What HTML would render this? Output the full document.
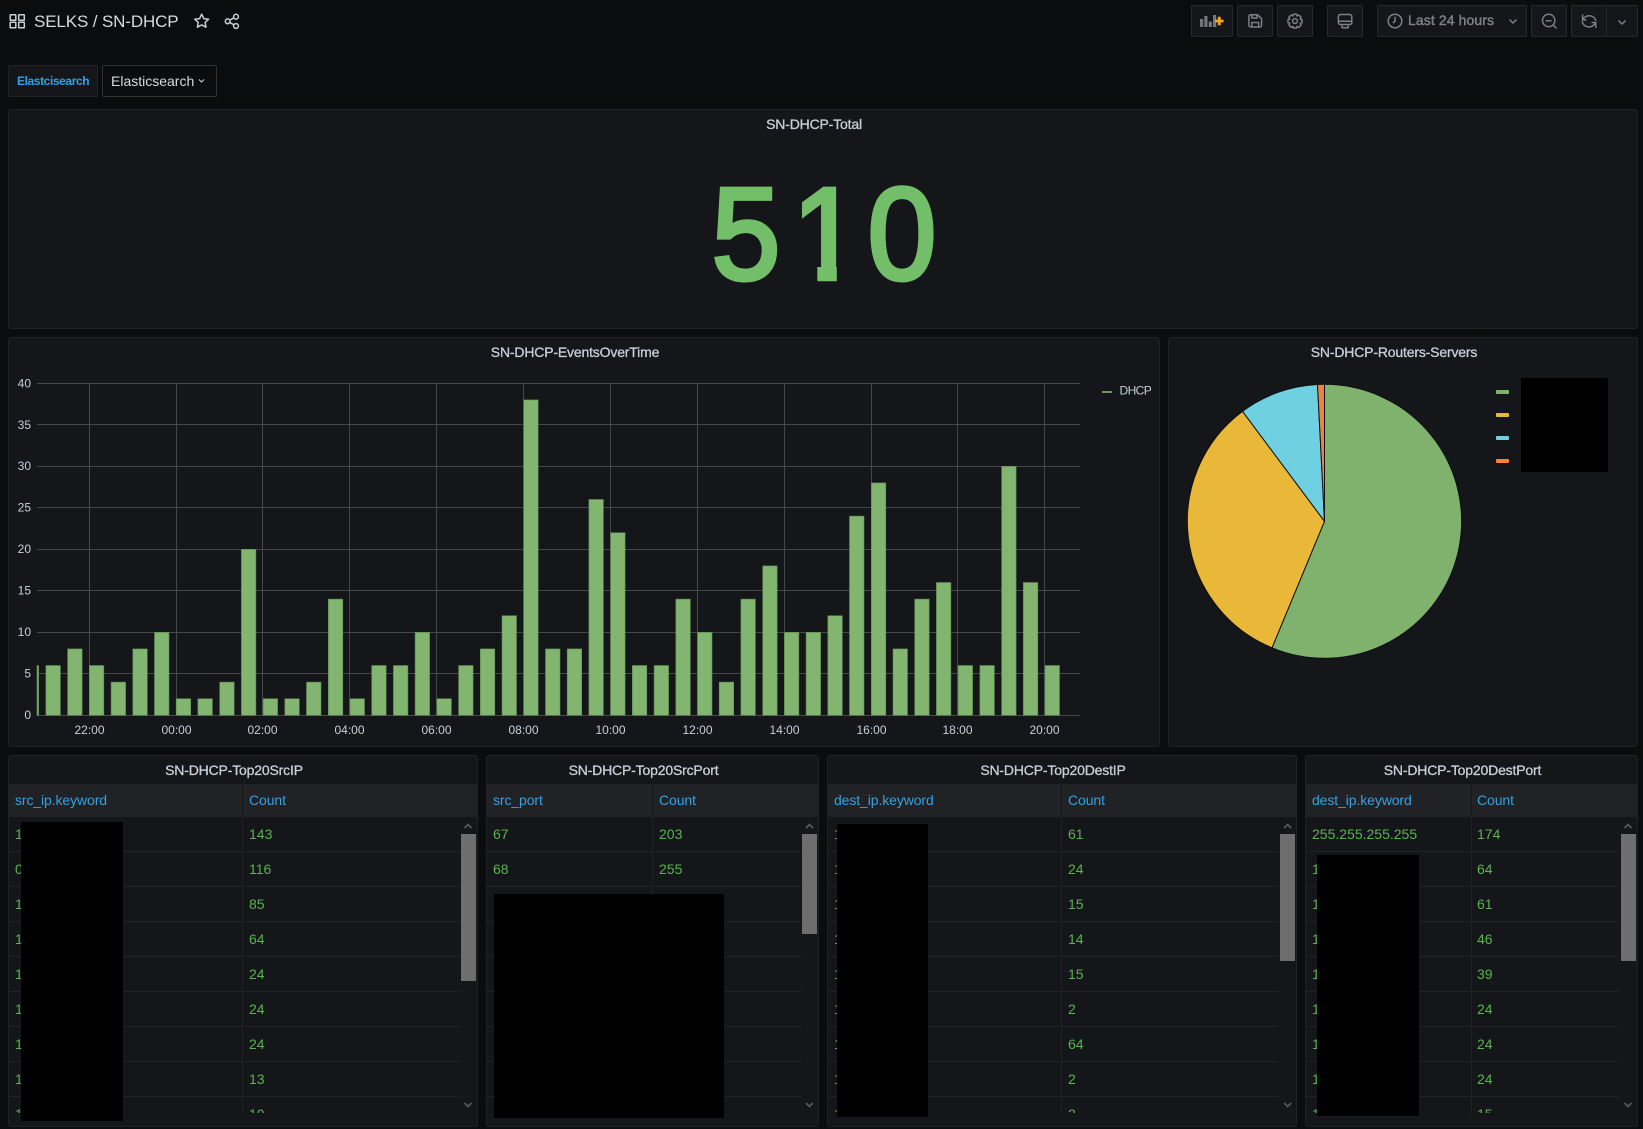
<!DOCTYPE html>
<html><head><meta charset="utf-8"><title>SELKS / SN-DHCP</title>
<style>
html,body{margin:0;padding:0;background:#0b0c0e;width:1643px;height:1129px;overflow:hidden}
body{font-family:"Liberation Sans",sans-serif;position:relative;color:#c7d0d9}
.a{position:absolute}
.panel{position:absolute;box-sizing:border-box;background:#141619;border:1px solid #202226;border-radius:3px}
.title{position:absolute;left:0;right:18px;text-align:center;font-size:14px;line-height:18px;color:#c7d0d9;letter-spacing:-.17px;-webkit-text-stroke:.3px #c7d0d9;white-space:nowrap}
.btn{position:absolute;box-sizing:border-box;top:5px;height:32px;background:#141619;border:1px solid #26282c;border-radius:2px}
.head{position:absolute;left:0;right:0;top:28px;height:33px;background:#202226;font-size:14px;line-height:33px;color:#33a2e5;letter-spacing:-.1px}
.head span{position:absolute;top:0}
.body{position:absolute;left:0;right:0;top:61px;height:296px;overflow:hidden;font-size:14px;color:#5ab44f}
.r{position:relative;box-sizing:border-box;height:35px;border-bottom:1px solid #202226;line-height:34px}
.r b,.r i{position:absolute;top:0;font-weight:normal;font-style:normal}
.sep{position:absolute;top:28px;height:329px;width:1px;background:#202226}
.sep:before{content:"";position:absolute;left:0;top:0;height:33px;width:1px;background:#141619}
.thumb{position:absolute;top:78px;background:#6e6e6e}
.blk{position:absolute;background:#000}
svg text{font-family:"Liberation Sans",sans-serif}
#p1 .r{width:452px}#p1 b,#p1 .hb{left:6px}#p1 i,#p1 .hi{left:240px}
#p2 .r{width:314px}#p2 b,#p2 .hb{left:6px}#p2 i,#p2 .hi{left:172px}
#p3 .r{width:451px}#p3 b,#p3 .hb{left:6px}#p3 i,#p3 .hi{left:240px}
#p4 .r{width:314px}#p4 b,#p4 .hb{left:6px}#p4 i,#p4 .hi{left:171px}
</style></head><body>

<div class="a" style="left:34px;top:11px;font-size:17px;line-height:22px;color:#d8d9da;letter-spacing:-.13px;white-space:nowrap">SELKS / SN-DHCP</div>

<div class="a" style="box-sizing:border-box;left:8px;top:65px;width:90px;height:32px;background:#141619;border:1px solid #202226;border-radius:2px;font-size:12px;font-weight:bold;line-height:30px;color:#33a2e5;padding-left:8px;letter-spacing:-.4px;white-space:nowrap">Elastcisearch</div>
<div class="a" style="box-sizing:border-box;left:102px;top:65px;width:115px;height:32px;background:#0b0c0e;border:1px solid #2c3235;border-radius:2px;font-size:14px;line-height:30px;color:#d8d9da;padding-left:8px;white-space:nowrap">Elasticsearch</div>

<div class="btn" style="left:1191px;width:42px"></div>
<div class="btn" style="left:1237px;width:36px"></div>
<div class="btn" style="left:1277px;width:36px"></div>
<div class="btn" style="left:1327px;width:36px"></div>
<div class="btn" style="left:1377px;width:150px"></div>
<div class="a" style="left:1408px;top:10px;font-size:14px;line-height:20px;color:#7b8087;-webkit-text-stroke:.45px #7b8087;letter-spacing:.1px;white-space:nowrap">Last 24 hours</div>
<div class="btn" style="left:1531px;width:36px"></div>
<div class="btn" style="left:1571px;width:36px;border-right:0"></div>
<div class="btn" style="left:1606px;width:32px"></div>

<div class="panel" style="left:8px;top:109px;width:1630px;height:220px"><div class="title" style="top:5px">SN-DHCP-Total</div></div>

<div class="panel" style="left:8px;top:337px;width:1152px;height:410px"><div class="title" style="top:5px">SN-DHCP-EventsOverTime</div></div>
<div class="panel" style="left:1168px;top:337px;width:470px;height:410px"><div class="title" style="top:5px">SN-DHCP-Routers-Servers</div></div>

<div class="panel" id="p1" style="left:8px;top:755px;width:470px;height:372px">
<div class="title" style="top:5px">SN-DHCP-Top20SrcIP</div>
<div class="head"><span class="hb">src_ip.keyword</span><span class="hi">Count</span></div>
<div class="body">
<div class="r"><b>1</b><i>143</i></div><div class="r"><b>0</b><i>116</i></div><div class="r"><b>1</b><i>85</i></div><div class="r"><b>1</b><i>64</i></div><div class="r"><b>1</b><i>24</i></div><div class="r"><b>1</b><i>24</i></div><div class="r"><b>1</b><i>24</i></div><div class="r"><b>1</b><i>13</i></div><div class="r"><b>1</b><i>10</i></div>
</div>
<div class="sep" style="left:233px"></div>
<div class="thumb" style="left:452px;width:15px;height:147px"></div>
</div>

<div class="panel" id="p2" style="left:486px;top:755px;width:333px;height:372px">
<div class="title" style="top:5px">SN-DHCP-Top20SrcPort</div>
<div class="head"><span class="hb">src_port</span><span class="hi">Count</span></div>
<div class="body">
<div class="r"><b>67</b><i>203</i></div><div class="r"><b>68</b><i>255</i></div><div class="r"><b>1</b></div><div class="r"><b>1</b></div><div class="r"><b>1</b></div><div class="r"><b>1</b></div><div class="r"><b>1</b></div><div class="r"><b>1</b></div><div class="r"><b>1</b></div>
</div>
<div class="sep" style="left:165px"></div>
<div class="thumb" style="left:315px;width:15px;height:100px"></div>
</div>

<div class="panel" id="p3" style="left:827px;top:755px;width:470px;height:372px">
<div class="title" style="top:5px">SN-DHCP-Top20DestIP</div>
<div class="head"><span class="hb">dest_ip.keyword</span><span class="hi">Count</span></div>
<div class="body">
<div class="r"><b>1</b><i>61</i></div><div class="r"><b>1</b><i>24</i></div><div class="r"><b>1</b><i>15</i></div><div class="r"><b>1</b><i>14</i></div><div class="r"><b>1</b><i>15</i></div><div class="r"><b>1</b><i>2</i></div><div class="r"><b>1</b><i>64</i></div><div class="r"><b>1</b><i>2</i></div><div class="r"><b>1</b><i>2</i></div>
</div>
<div class="sep" style="left:233px"></div>
<div class="thumb" style="left:452px;width:15px;height:127px"></div>
</div>

<div class="panel" id="p4" style="left:1305px;top:755px;width:333px;height:372px">
<div class="title" style="top:5px">SN-DHCP-Top20DestPort</div>
<div class="head"><span class="hb">dest_ip.keyword</span><span class="hi">Count</span></div>
<div class="body">
<div class="r"><b>255.255.255.255</b><i>174</i></div><div class="r"><b>1</b><i>64</i></div><div class="r"><b>1</b><i>61</i></div><div class="r"><b>1</b><i>46</i></div><div class="r"><b>1</b><i>39</i></div><div class="r"><b>1</b><i>24</i></div><div class="r"><b>1</b><i>24</i></div><div class="r"><b>1</b><i>24</i></div><div class="r"><b>1</b><i>15</i></div>
</div>
<div class="sep" style="left:165px"></div>
<div class="thumb" style="left:315px;width:15px;height:127px"></div>
</div>

<svg class="a" style="left:0;top:0" width="1643" height="1129" viewBox="0 0 1643 1129" xmlns="http://www.w3.org/2000/svg">
<!-- big stat -->
<text transform="translate(824,0) scale(.94,1) translate(-824,0)" x="741 826.6 907" y="279" text-anchor="middle" font-size="131" fill="#73bf69" stroke="#73bf69" stroke-width="4.5">510</text>
<path d="M788 264H817.3V286H788ZM836.8 264H864V286H836.8Z" fill="#141619"/>
<!-- grid -->
<g stroke="#464749" stroke-width="1" shape-rendering="crispEdges">
<path d="M37 383.5H1080M37 424.5H1080M37 466.5H1080M37 507.5H1080M37 549.5H1080M37 590.5H1080M37 632.5H1080M37 673.5H1080M37 715.5H1080"/>
<path d="M89.5 383V715M176.5 383V715M262.5 383V715M349.5 383V715M436.5 383V715M523.5 383V715M610.5 383V715M697.5 383V715M784.5 383V715M871.5 383V715M957.5 383V715M1044.5 383V715"/>
</g>
<!-- bars -->
<g transform="translate(0,715.3) scale(1,-1)" fill="#82b570" stroke="#5f8a52" stroke-width=".6">
<rect x="37" y="0" width="1.6" height="49.8"/>
<rect x="45.9" width="14.5" height="49.8"/><rect x="67.6" width="14.5" height="66.4"/><rect x="89.3" width="14.5" height="49.8"/><rect x="111.1" width="14.5" height="33.2"/><rect x="132.8" width="14.5" height="66.4"/><rect x="154.5" width="14.5" height="83"/><rect x="176.2" width="14.5" height="16.6"/><rect x="197.9" width="14.5" height="16.6"/><rect x="219.7" width="14.5" height="33.2"/><rect x="241.4" width="14.5" height="166"/><rect x="263.1" width="14.5" height="16.6"/><rect x="284.8" width="14.5" height="16.6"/><rect x="306.5" width="14.5" height="33.2"/><rect x="328.3" width="14.5" height="116.2"/><rect x="350" width="14.5" height="16.6"/><rect x="371.7" width="14.5" height="49.8"/><rect x="393.4" width="14.5" height="49.8"/><rect x="415.1" width="14.5" height="83"/><rect x="436.9" width="14.5" height="16.6"/><rect x="458.6" width="14.5" height="49.8"/><rect x="480.3" width="14.5" height="66.4"/><rect x="502" width="14.5" height="99.6"/><rect x="523.7" width="14.5" height="315.4"/><rect x="545.5" width="14.5" height="66.4"/><rect x="567.2" width="14.5" height="66.4"/><rect x="588.9" width="14.5" height="215.8"/><rect x="610.6" width="14.5" height="182.6"/><rect x="632.3" width="14.5" height="49.8"/><rect x="654.1" width="14.5" height="49.8"/><rect x="675.8" width="14.5" height="116.2"/><rect x="697.5" width="14.5" height="83"/><rect x="719.2" width="14.5" height="33.2"/><rect x="740.9" width="14.5" height="116.2"/><rect x="762.7" width="14.5" height="149.4"/><rect x="784.4" width="14.5" height="83"/><rect x="806.1" width="14.5" height="83"/><rect x="827.8" width="14.5" height="99.6"/><rect x="849.5" width="14.5" height="199.2"/><rect x="871.3" width="14.5" height="232.4"/><rect x="893" width="14.5" height="66.4"/><rect x="914.7" width="14.5" height="116.2"/><rect x="936.4" width="14.5" height="132.8"/><rect x="958.1" width="14.5" height="49.8"/><rect x="979.9" width="14.5" height="49.8"/><rect x="1001.6" width="14.5" height="249"/><rect x="1023.3" width="14.5" height="132.8"/><rect x="1045" width="14.5" height="49.8"/>
</g>
<!-- axis labels -->
<g font-size="12" fill="#c7d0d9" text-anchor="end">
<text x="31" y="387.5">40</text><text x="31" y="429">35</text><text x="31" y="470">30</text><text x="31" y="511.5">25</text><text x="31" y="553">20</text><text x="31" y="594.5">15</text><text x="31" y="636">10</text><text x="31" y="677.5">5</text><text x="31" y="719">0</text>
</g>
<g font-size="12" fill="#c7d0d9" text-anchor="middle">
<text x="89.5" y="734">22:00</text><text x="176.5" y="734">00:00</text><text x="262.5" y="734">02:00</text><text x="349.5" y="734">04:00</text><text x="436.5" y="734">06:00</text><text x="523.5" y="734">08:00</text><text x="610.5" y="734">10:00</text><text x="697.5" y="734">12:00</text><text x="784.5" y="734">14:00</text><text x="871.5" y="734">16:00</text><text x="957.5" y="734">18:00</text><text x="1044.5" y="734">20:00</text>
</g>
<rect x="1102" y="391" width="10" height="2" fill="#6b9a5c"/>
<text x="1119.5" y="394.5" font-size="12" letter-spacing="-.6" fill="#c7d0d9">DHCP</text>
<!-- pie -->
<g stroke="#0e0f10" stroke-width="1" stroke-linejoin="round">
<path d="M1324.5 521.3L1324.5 384.3A137 137 0 1 1 1272 647.8Z" fill="#7eb26d"/>
<path d="M1324.5 521.3L1272 647.8A137 137 0 0 1 1242.5 411.3Z" fill="#eab839"/>
<path d="M1324.5 521.3L1242.5 411.3A137 137 0 0 1 1317.5 384.5Z" fill="#6ed0e0"/>
<path d="M1324.5 521.3L1317.5 384.5A137 137 0 0 1 1324.5 384.3Z" fill="#ef843c"/>
</g>
<rect x="1496" y="390" width="13" height="4" rx="1" fill="#7eb26d"/>
<rect x="1496" y="413" width="13" height="4" rx="1" fill="#eab839"/>
<rect x="1496" y="436" width="13" height="4" rx="1" fill="#6ed0e0"/>
<rect x="1496" y="459" width="13" height="4" rx="1" fill="#ef843c"/>
<!-- scroll arrows -->
<g fill="none" stroke="#595b5e" stroke-width="1.6">
<path d="M464.5 828L468 824.5L471.5 828M464.5 1103L468 1106.5L471.5 1103"/>
<path d="M806 828L809.5 824.5L813 828M806 1103L809.5 1106.5L813 1103"/>
<path d="M1284.2 828L1287.7 824.5L1291.2 828M1284.2 1103L1287.7 1106.5L1291.2 1103"/>
<path d="M1624.5 828L1628 824.5L1631.5 828M1624.5 1103L1628 1106.5L1631.5 1103"/>
</g>
<!-- top left icons -->
<g fill="none" stroke="#c7d0d9" stroke-width="1.5">
<rect x="10.2" y="14.7" width="5.6" height="5.6" rx=".6"/><rect x="18.7" y="14.7" width="5.6" height="5.6" rx=".6"/><rect x="10.2" y="22.2" width="5.6" height="5.6" rx=".6"/><rect x="18.7" y="22.2" width="5.6" height="5.6" rx=".6"/>
<path d="M201.7 14.2L203.8 18.6L208.6 19.2L205.1 22.5L206 27.2L201.7 24.9L197.4 27.2L198.3 22.5L194.8 19.2L199.6 18.6Z" stroke-linejoin="round"/>
<circle cx="236" cy="16.7" r="2.4"/><circle cx="227.7" cy="21.3" r="2.4"/><circle cx="236" cy="26" r="2.4"/>
<path d="M229.8 20.1L233.9 17.8M229.8 22.5L233.9 24.8"/>
</g>
<path d="M199 79.5L201.5 82L204 79.5" fill="none" stroke="#c7d0d9" stroke-width="1.1"/>
<!-- toolbar icons -->
<g fill="#73777c">
<rect x="1200" y="19" width="3.2" height="8"/><rect x="1204.3" y="16" width="3.2" height="11"/><rect x="1208.7" y="21.5" width="3.2" height="5.5"/><rect x="1213" y="15" width="3.2" height="12"/>
</g>
<path d="M1219.3 16.7V25.3M1215 21H1223.6" stroke="#f5a623" stroke-width="2.8" fill="none"/>
<g fill="none" stroke="#7b8087" stroke-width="1.5" stroke-linejoin="round">
<path d="M1250.5 14.8H1257.6L1261.6 18.8V25.4A1.6 1.6 0 0 1 1260 27H1250.5A1.6 1.6 0 0 1 1248.9 25.4V16.4A1.6 1.6 0 0 1 1250.5 14.8Z"/>
<path d="M1251.8 27V22.5H1258.7V27M1251.8 14.8V18H1257V14.8"/>
<circle cx="1295" cy="21" r="2.4"/>
<path d="M1293.4 14.2H1296.6L1297.1 16L1298.9 15.1L1301.1 17.3L1300.2 19.1L1302 19.6V22.8L1300.2 23.3L1301.1 25.1L1298.9 27.3L1297.1 26.4L1296.6 28H1293.4L1292.9 26.4L1291.1 27.3L1288.9 25.1L1289.8 23.3L1288 22.8V19.6L1289.8 19.1L1288.9 17.3L1291.1 15.1L1292.9 16Z"/>
<rect x="1338.4" y="14.5" width="13.4" height="10" rx="2"/>
<path d="M1338.4 21.3H1351.8M1342 24.5V27.8H1348.2V24.5"/>
<circle cx="1395" cy="21" r="6.8"/><path d="M1395 16.8V21.5L1392.8 23"/>
<circle cx="1548.7" cy="20.5" r="6.2"/><path d="M1545.7 20.7H1551.7M1553.3 25.1L1556.5 28.3"/>
<path d="M1583 19.5A7 7 0 0 1 1596 21M1595.3 22.8A7 7 0 0 1 1582 21.2"/>
<path d="M1582.6 14.5V20H1586.5M1595.7 28V22.5H1591.5"/>
<path d="M1509.5 19.5L1513 23L1516.5 19.5M1618.5 20.5L1622 24L1625.5 20.5"/>
</g>
</svg>

<div class="blk" style="left:21px;top:822px;width:102px;height:299px"></div>
<div class="blk" style="left:494px;top:894px;width:230px;height:224px"></div>
<div class="blk" style="left:837px;top:824px;width:91px;height:293px"></div>
<div class="blk" style="left:1317px;top:855px;width:102px;height:261px"></div>
<div class="blk" style="left:1521px;top:378px;width:87px;height:94px"></div>
</body></html>
